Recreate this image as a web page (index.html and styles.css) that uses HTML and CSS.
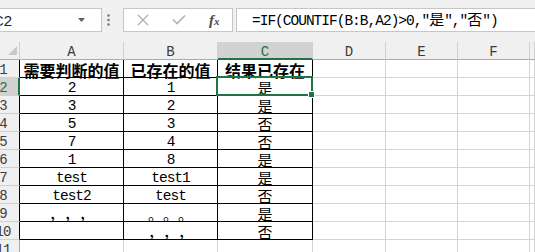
FILE: index.html
```html
<!DOCTYPE html>
<html>
<head>
<meta charset="utf-8">
<link rel="stylesheet" href="styles.css">
</head>
<body>
<div class="toolbar">
  <div class="namebox">
    <span class="nb-text">C2</span>
    <svg class="nb-arrow" width="7" height="4" viewBox="0 0 7 4"><path d="M0 0H7L3.5 4Z" fill="#5f5f5f"/></svg>
  </div>
  <svg class="dots" width="21" height="24" viewBox="0 0 21 24"><circle cx="6.5" cy="7.5" r="1.3"/><circle cx="6.5" cy="12" r="1.3"/><circle cx="6.5" cy="16.5" r="1.3"/></svg>
  <div class="fxbox">
    <svg class="ic-x" width="12" height="12" viewBox="0 0 12 12"><path d="M1 1L11 11M11 1L1 11" stroke="#b3b3b3" stroke-width="1.4" fill="none"/></svg>
    <svg class="ic-ok" width="14" height="12" viewBox="0 0 14 12"><path d="M1 5.5L5 9.5L13 1.5" stroke="#b3b3b3" stroke-width="1.6" fill="none"/></svg>
    <span class="fx">f<span class="fx-x">x</span></span>
  </div>
  <div class="formula">=IF(COUNTIF(B:B,A2)&gt;0,"<span class="cj">是</span>","<span class="cj">否</span>")</div>
</div>

<div class="sheet">
  <div class="c h corner"><svg width="19" height="17" viewBox="0 0 19 17"><path d="M17 4V13H8Z" fill="#c9c9c9"/></svg></div>
  <div class="c h">A</div>
  <div class="c h">B</div>
  <div class="c h hs">C</div>
  <div class="c h">D</div>
  <div class="c h">E</div>
  <div class="c h">F</div>
  <div class="c h"></div>

  <div class="c r rk"><span>1</span></div>
  <div class="c k t"><span class="cj">需要判断的值</span></div>
  <div class="c k t"><span class="cj">已存在的值</span></div>
  <div class="c k t"><span class="cj">结果已存在</span></div>
  <div class="c"></div><div class="c"></div><div class="c"></div><div class="c"></div>

  <div class="c r rs"><span>2</span></div>
  <div class="c k">2</div>
  <div class="c k">1</div>
  <div class="c k sel"><span class="cj">是</span><i class="handle"></i></div>
  <div class="c"></div><div class="c"></div><div class="c"></div><div class="c"></div>

  <div class="c r rk"><span>3</span></div>
  <div class="c k">3</div>
  <div class="c k">2</div>
  <div class="c k"><span class="cj">是</span></div>
  <div class="c"></div><div class="c"></div><div class="c"></div><div class="c"></div>

  <div class="c r rk"><span>4</span></div>
  <div class="c k">5</div>
  <div class="c k">3</div>
  <div class="c k"><span class="cj">否</span></div>
  <div class="c"></div><div class="c"></div><div class="c"></div><div class="c"></div>

  <div class="c r rk"><span>5</span></div>
  <div class="c k">7</div>
  <div class="c k">4</div>
  <div class="c k"><span class="cj">否</span></div>
  <div class="c"></div><div class="c"></div><div class="c"></div><div class="c"></div>

  <div class="c r rk"><span>6</span></div>
  <div class="c k">1</div>
  <div class="c k">8</div>
  <div class="c k"><span class="cj">是</span></div>
  <div class="c"></div><div class="c"></div><div class="c"></div><div class="c"></div>

  <div class="c r rk"><span>7</span></div>
  <div class="c k">test</div>
  <div class="c k">test1</div>
  <div class="c k"><span class="cj">是</span></div>
  <div class="c"></div><div class="c"></div><div class="c"></div><div class="c"></div>

  <div class="c r rk"><span>8</span></div>
  <div class="c k">test2</div>
  <div class="c k">test</div>
  <div class="c k"><span class="cj">否</span></div>
  <div class="c"></div><div class="c"></div><div class="c"></div><div class="c"></div>

  <div class="c r rk"><span>9</span></div>
  <div class="c k"><span class="cj pu">，，，</span></div>
  <div class="c k"><span class="cj pu">。。。</span></div>
  <div class="c k"><span class="cj">是</span></div>
  <div class="c"></div><div class="c"></div><div class="c"></div><div class="c"></div>

  <div class="c r rk"><span>10</span></div>
  <div class="c k"></div>
  <div class="c k"><span class="cj pu">，，，</span></div>
  <div class="c k"><span class="cj">否</span></div>
  <div class="c"></div><div class="c"></div><div class="c"></div><div class="c"></div>

  <div class="c r"><span>11</span></div>
  <div class="c"></div><div class="c"></div><div class="c"></div>
  <div class="c"></div><div class="c"></div><div class="c"></div><div class="c"></div>
</div>
</body>
</html>
```

FILE: styles.css
```css
* { box-sizing: border-box; margin: 0; padding: 0; }

body {
  width: 535px;
  height: 252px;
  overflow: hidden;
  background: #fff;
  font-family: "Liberation Mono", "Noto Sans CJK SC", monospace;
  color: #000;
}

/* ---------- formula bar ---------- */
.toolbar {
  height: 42px;
  background: #f0f0f0;
  display: flex;
  align-items: flex-start;
  padding-top: 8px;
  overflow: hidden;
}

.namebox {
  flex: none;
  width: 112px;
  height: 24px;
  margin-left: -10px;
  background: #fff;
  border: 1px solid #c6c6c6;
  display: flex;
  align-items: center;
}

.nb-text {
  flex: 1;
  align-self: flex-start;
  padding: 2px 0 0 2px;
  line-height: 20px;
  font-family: "Liberation Sans", sans-serif;
  font-size: 15px;
  color: #222;
}

.nb-arrow { flex: none; margin-right: 16px; }

.dots { flex: none; fill: #7a7a7a; }

.fxbox {
  flex: none;
  width: 110px;
  height: 24px;
  background: #fff;
  border: 1px solid #c6c6c6;
  display: flex;
  align-items: center;
}

.ic-x { flex: none; margin-left: 13px; }
.ic-ok { flex: none; margin-left: 23px; }

.fx {
  flex: none;
  margin-left: 23px;
  font-family: "Liberation Serif", serif;
  font-style: italic;
  font-weight: 700;
  font-size: 15px;
  color: #4a4a4a;
  line-height: 20px;
}
.fx-x { font-size: 11px; }

.formula {
  flex: none;
  width: 320px;
  height: 24px;
  margin-left: 3px;
  background: #fff;
  border: 1px solid #c6c6c6;
  padding: 2px 0 0 15px;
  line-height: 20px;
  font-size: 14.5px;
  letter-spacing: -1px;
  white-space: nowrap;
  color: #000;
}

/* ---------- grid ---------- */
.sheet {
  display: grid;
  grid-template-columns: 20px 104px 94px 95px 73px 72px 72px 1fr;
  grid-auto-rows: 18px;
}

.c {
  border-right: 1px solid #d4d4d4;
  border-bottom: 1px solid #d4d4d4;
  padding-top: 3px;
  text-align: center;
  font-size: 14.5px;
  letter-spacing: -1px;
  line-height: 14px;
  white-space: nowrap;
}

.h {
  background: #f0f0f0;
  border-right-color: #d0d0d0;
  border-bottom-color: #ababab;
  color: #3c3c3c;
  font-size: 14px;
  letter-spacing: 0;
}

.corner { padding-top: 0; line-height: 0; }

.hs {
  background: #d2d2d2;
  color: #217346;
  border-bottom: 2px solid #217346;
}

.r {
  background: #f0f0f0;
  border-right-color: #ababab;
  border-bottom-color: #d0d0d0;
  color: #3c3c3c;
  overflow: hidden;
  font-size: 14px;
}
.r span {
  display: block;
  width: 32px;
  margin-left: -13px;
  text-align: center;
}
.rk { border-right-color: #000; }
.rs {
  background: #d2d2d2;
  color: #217346;
  border-right: 2px solid #217346;
}

.k {
  border-right-color: #000;
  border-bottom-color: #000;
}

.cj {
  font-family: "Noto Sans CJK SC", sans-serif;
  font-size: 15px;
  line-height: 14px;
  letter-spacing: 0;
  text-spacing-trim: space-all;
  font-feature-settings: "fwid" 1;
}
.t .cj {
  font-weight: 700;
  font-size: 16px;
}
.pu { letter-spacing: 0; }

/* selection */
.sel { position: relative; }
.sel::after {
  content: "";
  position: absolute;
  top: -2px;
  left: -2px;
  right: -1px;
  bottom: -1px;
  border: 2px solid #217346;
  z-index: 2;
}
.handle {
  position: absolute;
  right: -3px;
  bottom: -3px;
  width: 7px;
  height: 7px;
  background: #217346;
  border: 1px solid #fff;
  z-index: 3;
}
```
